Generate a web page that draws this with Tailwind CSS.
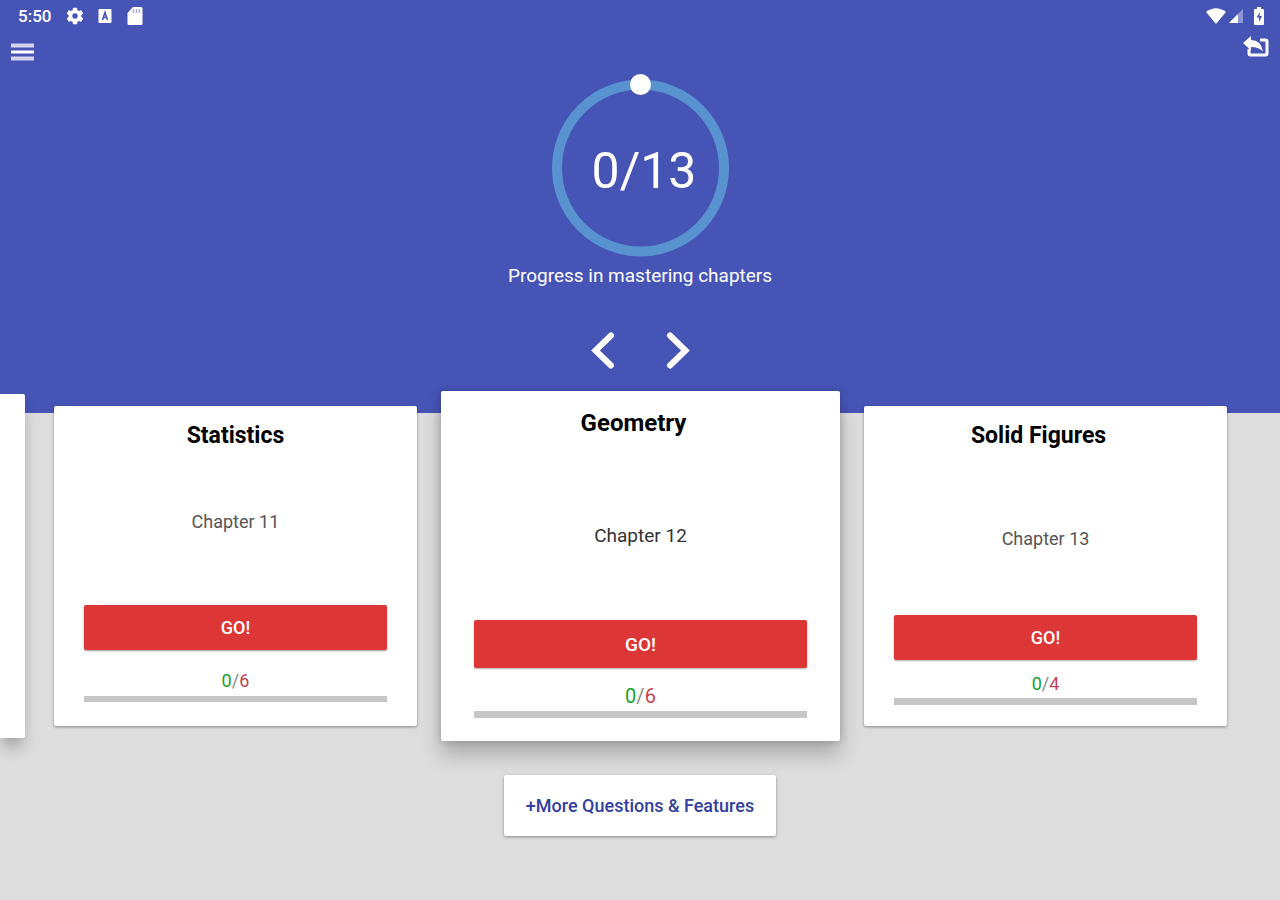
<!DOCTYPE html>
<html lang="en">
<head>
<meta charset="utf-8">
<meta name="viewport" content="width=device-width, initial-scale=1">
<title>Chapters</title>
<script src="https://cdn.jsdelivr.net/npm/@tailwindcss/browser@4"></script>
</head>
<body class="min-h-screen overflow-x-hidden bg-[#dddddd] font-['Roboto',sans-serif] text-black">
<header class="bg-[#4654b6] pb-11 text-white">
  <!-- Status bar -->
  <div class="flex h-8 items-center justify-between pl-[18px] pr-4">
    <div class="flex items-center">
      <span class="text-[17px] font-medium leading-6">5:50</span>
      <svg class="ml-3.5 size-5" viewBox="0 0 24 24" fill="currentColor" aria-hidden="true"><path d="M19.400 13c.04-.3.06-.6.06-1s-.02-.7-.07-1l2.100-1.600c.2-.150.240-.400.120-.600l-2-3.500c-.120-.200-.370-.280-.600-.200l-2.500 1a7.300 7.300 0 0 0-1.700-1L14.500 2.400a.5.500 0 0 0-.5-.400h-4a.5.500 0 0 0-.5.400L9.100 5.100a7.600 7.600 0 0 0-1.700 1l-2.500-1c-.2-.100-.5 0-.6.200l-2 3.500c-.100.200-.100.450.100.600L4.500 11a7 7 0 0 0 0 2l-2.100 1.600c-.2.150-.2.400-.100.600l2 3.500c.100.200.400.280.600.200l2.500-1a7.300 7.300 0 0 0 1.700 1l.4 2.700c0 .240.240.400.500.400h4c.240 0 .460-.160.500-.400l.4-2.700a7.600 7.600 0 0 0 1.700-1l2.500 1c.2.100.500 0 .600-.200l2-3.500c.100-.200.100-.450-.100-.600zM12 15.200a3.200 3.200 0 1 1 0-6.400 3.200 3.200 0 0 1 0 6.400z"/></svg>
      <svg class="ml-3 size-4" viewBox="0 0 16 16" aria-hidden="true"><rect x="1.500" y="1" width="13" height="14" rx="1" fill="#fff"/><path d="M5.500 12L8 4.500 10.500 12M6.500 9.500h3" fill="none" stroke="#4654b6" stroke-width="1.600"/></svg>
      <svg class="ml-3.5 h-5 w-4" viewBox="0 0 16 20" aria-hidden="true"><path d="M6 1h8q1.500 0 1.500 1.500v15q0 1.500-1.500 1.500H2q-1.500 0-1.500-1.500V7z" fill="#fff"/><path d="M6.500 3v4M9.500 3v4M12.500 3v4" stroke="#a9afdf" stroke-width="1.500"/></svg>
    </div>
    <div class="flex items-center">
      <svg class="h-4 w-5" viewBox="0 0 20 16" fill="currentColor" aria-hidden="true"><path d="M0 4Q10-3.500 20 4L10 16z"/></svg>
      <svg class="ml-0.5 size-4" viewBox="0 0 16 16" aria-hidden="true"><path d="M15 1v14H1z" fill="#8f98d6"/><path d="M10 6v9H1z" fill="#fff"/></svg>
      <svg class="ml-2.5 h-[18px] w-2.5" viewBox="0 0 10 18" aria-hidden="true"><path d="M3 0h4v2h2q1 0 1 1v14q0 1-1 1H1q-1 0-1-1V3q0-1 1-1h2z" fill="#fff"/><path d="M6 5L2.500 10.500H5V15l3-6H5.500z" fill="#4654b6"/></svg>
    </div>
  </div>
  <!-- Toolbar -->
  <div class="flex h-10 items-start justify-between px-2.5">
    <button type="button" aria-label="Menu" class="pt-[11px]">
      <svg class="h-[18px] w-6" viewBox="0 0 24 18" aria-hidden="true"><path d="M1 2.500h23M1 15.500h23" stroke="#d5d4ef" stroke-width="4"/><path d="M1 9h23" stroke="#fff" stroke-width="3"/></svg>
    </button>
    <button type="button" aria-label="Back" class="pt-1">
      <svg class="h-[22px] w-7" viewBox="0 0 28 22" aria-hidden="true"><path d="M18 4h5.500q1.500 0 1.500 1.500v12q0 1.500-1.500 1.500h-15q-1.500 0-1.500-1.500V13" fill="none" stroke="#fff" stroke-width="3"/><path d="M1 7L9 0v4q10 0 12 11.500-4-4.500-12-4.500v3.500z" fill="#fff"/></svg>
    </button>
  </div>
  <!-- Overall progress -->
  <div class="flex flex-col items-center">
    <div class="relative mt-px">
      <svg class="size-[184px]" viewBox="0 0 184 184" aria-hidden="true"><circle cx="92.500" cy="95" r="83.500" fill="none" stroke="#5893d0" stroke-width="10"/><circle cx="92.500" cy="11.500" r="10.500" fill="#fff"/></svg>
      <p class="absolute inset-0 flex items-center justify-center pl-2 pt-3 text-[50px] leading-none">0/13</p>
    </div>
    <p class="mt-[7px] text-[19px] leading-6">Progress in mastering chapters</p>
    <div class="mt-11 flex gap-[52px]">
      <button type="button" aria-label="Previous chapter"><svg class="h-[37px] w-6" viewBox="0 0 24 37" fill="none" stroke="currentColor" stroke-width="6" stroke-linecap="round" aria-hidden="true"><path d="M21 3.500L5.500 18.500 21 33.500"/></svg></button>
      <button type="button" aria-label="Next chapter"><svg class="h-[37px] w-6" viewBox="0 0 24 37" fill="none" stroke="currentColor" stroke-width="6" stroke-linecap="round" aria-hidden="true"><path d="M4 3.500L19.500 18.500 4 33.500"/></svg></button>
    </div>
  </div>
</header>

<main class="flex flex-col items-center pb-16">
  <!-- Chapter carousel -->
  <div class="-mt-[22px] flex w-full items-center">
    <div class="w-[54px] shrink-0 pr-[29px]">
      <div class="h-[344px] rounded-r-xs bg-white shadow-[0_12px_16px_-4px_rgba(0,0,0,0.35)]"></div>
    </div>
    <div class="grid flex-1 grid-cols-[10fr_11fr_10fr] items-center gap-6">
      <article class="flex flex-col rounded-xs bg-white px-[30px] pb-6 pt-4 text-center shadow-[0_1px_3px_rgba(0,0,0,0.4)]">
        <h2 class="text-[23px] font-bold leading-7">Statistics</h2>
        <p class="mt-[60px] text-lg leading-6 text-[#555555]">Chapter 11</p>
        <button type="button" class="mt-[71px] h-[45px] rounded-xs bg-[#dd3636] text-lg font-medium leading-6 text-white shadow-[0_1px_2px_rgba(0,0,0,0.4)]">GO!</button>
        <p class="mt-[19px] text-lg leading-6 text-[#888888]"><span class="text-[#18a030]">0</span>/<span class="text-[#c24350]">6</span></p>
        <div role="progressbar" aria-label="Statistics progress" aria-valuenow="0" aria-valuemax="6" class="mt-[3px] h-1.5 bg-[#c6c6c6]"></div>
      </article>
      <article class="flex flex-col rounded-xs bg-white px-[33px] pb-[23px] pt-[18px] text-center shadow-[0_14px_20px_rgba(0,0,0,0.22),0_0_8px_rgba(0,0,0,0.2)]">
        <h2 class="pr-3.5 text-2xl font-bold leading-7">Geometry</h2>
        <p class="mt-[87px] text-[19px] leading-6 text-[#333333]">Chapter 12</p>
        <button type="button" class="mt-[72px] h-12 rounded-xs bg-[#dd3636] pt-0.5 text-[19px] font-medium leading-6 text-white shadow-[0_1px_2px_rgba(0,0,0,0.3)]">GO!</button>
        <p class="mt-4 text-xl leading-6 text-[#888888]"><span class="text-[#18a030]">0</span>/<span class="text-[#c24350]">6</span></p>
        <div role="progressbar" aria-label="Geometry progress" aria-valuenow="0" aria-valuemax="6" class="mt-[3px] h-[7px] bg-[#c6c6c6]"></div>
      </article>
      <article class="flex flex-col rounded-xs bg-white px-[30px] pb-[21px] pt-4 text-center shadow-[0_1px_3px_rgba(0,0,0,0.4)]">
        <h2 class="pr-3.5 text-[23px] font-bold leading-7">Solid Figures</h2>
        <p class="mt-[77px] text-lg leading-6 text-[#555555]">Chapter 13</p>
        <button type="button" class="mt-16 h-[45px] rounded-xs bg-[#dd3636] text-lg font-medium leading-6 text-white shadow-[0_1px_2px_rgba(0,0,0,0.3)]">GO!</button>
        <p class="mt-3 text-lg leading-6 text-[#888888]"><span class="text-[#18a030]">0</span>/<span class="text-[#c24350]">4</span></p>
        <div role="progressbar" aria-label="Solid Figures progress" aria-valuenow="0" aria-valuemax="4" class="mt-0.5 h-[7px] bg-[#c6c6c6]"></div>
      </article>
    </div>
    <div class="w-[53px] shrink-0"></div>
  </div>
  <button type="button" class="relative mt-[34px] h-[61px] rounded-xs bg-white px-[22px] text-lg font-medium leading-6 text-[#3440a0] shadow-[0_1px_3px_rgba(0,0,0,0.4)]">+More Questions &amp; Features</button>
</main>
</body>
</html>
